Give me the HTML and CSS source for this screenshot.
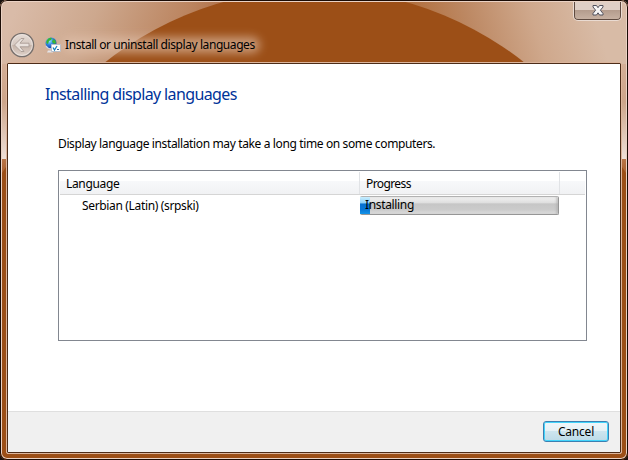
FILE: index.html
```html
<!DOCTYPE html>
<html lang="en">
<head>
<meta charset="utf-8">
<title>Install or uninstall display languages</title>
<link rel="stylesheet" href="styles.css">
</head>
<body>
<div class="window">
  <svg class="glass" width="628" height="460" viewBox="0 0 628 460" aria-hidden="true">
    <defs>
      <linearGradient id="left" gradientUnits="userSpaceOnUse" x1="20" y1="0" x2="215" y2="85">
        <stop offset="0" stop-color="#d9bba8"/><stop offset=".35" stop-color="#cda88e"/><stop offset=".75" stop-color="#bb845f"/><stop offset="1" stop-color="#a96337"/>
      </linearGradient>
      <linearGradient id="right" gradientUnits="userSpaceOnUse" x1="425" y1="50" x2="590" y2="0">
        <stop offset="0" stop-color="#b1703f"/><stop offset=".3" stop-color="#bd8964"/><stop offset=".65" stop-color="#cfa88c"/><stop offset="1" stop-color="#d8bba6"/>
      </linearGradient>
      <linearGradient id="side" x1="0" y1="0" x2="0" y2="1">
        <stop offset="0" stop-color="#d4ae96"/><stop offset=".4" stop-color="#cda58a"/><stop offset="1" stop-color="#eee0d8"/>
      </linearGradient>
      <linearGradient id="low" x1="0" y1="0" x2="0" y2="1">
        <stop offset="0" stop-color="#b87447"/><stop offset="1" stop-color="#a95f2d"/>
      </linearGradient>
      <clipPath id="top"><path d="M0 0H628V64H0z"/></clipPath>
    </defs>
    <rect width="628" height="460" fill="#9c4f17"/>
    <rect width="315" height="64" fill="url(#left)"/>
    <rect x="315" width="313" height="64" fill="url(#right)"/>
    <circle cx="314.500" cy="327.500" r="338" fill="#9c4f17" clip-path="url(#top)"/>
    <path d="M0 64H8V159H0zM620 64H628V159H620z" fill="url(#side)"/>
    <path d="M0 159H8V164L0 176zM620 159H628V176L620 164z" fill="url(#low)"/>
  </svg>

  <header class="titlebar">
    <svg class="back" width="26" height="26" viewBox="0 0 26 26" role="img" aria-label="Back">
      <defs><linearGradient id="orb" x1="0" y1="0" x2="0" y2="1"><stop offset="0" stop-color="#e6dcd6"/><stop offset=".48" stop-color="#d6c9c1"/><stop offset=".5" stop-color="#c5b3a8"/><stop offset="1" stop-color="#dfd2ca"/></linearGradient></defs>
      <circle cx="13" cy="13" r="11.600" fill="url(#orb)" stroke="#77706d" stroke-width="1.400"/>
      <circle cx="13" cy="13" r="10.400" fill="none" stroke="#eee6e2" stroke-width=".8"/>
      <path d="M5.500 13 12 6.500h3l-4 4.700h9v3.600h-9l4 4.700h-3z" fill="#e9e1dc" stroke="#a99c95" stroke-width=".9" stroke-linejoin="round"/>
    </svg>
    <svg class="app-icon" width="16" height="16" viewBox="0 0 16 16" aria-hidden="true">
      <defs><radialGradient id="sea" cx=".35" cy=".3" r=".75"><stop offset="0" stop-color="#9deaff"/><stop offset=".5" stop-color="#2b82e0"/><stop offset="1" stop-color="#1739a5"/></radialGradient></defs>
      <path d="M3 13.500h5v2H2z" fill="#e4e4e8"/>
      <circle cx="6" cy="6" r="5.500" fill="url(#sea)"/>
      <path d="M2 3Q4 0 7 1L6 3 4 4 3 7Q0 6 2 3zM8 2q3 1 3 4L9 7 7 5z" fill="#35b435"/>
      <path d="M1 9q2 3 5 3" fill="none" stroke="#ccd4e0" stroke-width="1.300"/>
      <path d="M6.500 7.500h9v7h-9z" fill="#fff" stroke="#b6bdc9"/>
      <path d="m8 10.500 1.500 2.500L12 9" fill="none" stroke="#1680bd" stroke-width="1.300"/>
      <path d="M12 12.500h2" stroke="#245aa0"/>
    </svg>
    <span class="title">Install or uninstall display languages</span>
    <div class="close">
      <svg width="12" height="11" viewBox="0 0 12 11" role="img" aria-label="Close"><path d="M1 .5h3.500L6 2.700 7.500.5H11V2L8.400 5.200 11 8.500V10H7.500L6 7.800 4.500 10H1V8.500L3.600 5.200 1 2z" fill="#f7f5f5" stroke="#50515d"/></svg>
    </div>
  </header>

  <main class="client">
    <section class="page">
      <h1>Installing display languages</h1>
      <p>Display language installation may take a long time on some computers.</p>
      <div class="list">
        <div class="row head"><div class="cell"><span>Language</span></div><div class="cell"><span>Progress</span></div><div class="rest"></div></div>
        <div class="row item"><div class="name"><span>Serbian (Latin) (srpski)</span></div><div class="bar"><div class="fill"></div><span class="status">Installing</span></div></div>
      </div>
    </section>
    <footer><button type="button"><span>Cancel</span></button></footer>
  </main>
</div>
</body>
</html>
```

FILE: styles.css
```css
* { box-sizing: border-box; }
body {
  margin: 0;
  width: 628px;
  height: 460px;
  overflow: hidden;
  background: #17110f;
  font: 12px/16px "Noto Sans", "Open Sans", sans-serif;
  color: #000;
}
.window {
  position: relative;
  width: 628px;
  height: 460px;
  padding: 1px 6px 6px;
  border-radius: 7px;
  overflow: hidden;
}
.window::after {
  content: "";
  position: absolute;
  inset: 0;
  border: 1px solid #1b0c05;
  border-radius: 7px;
  box-shadow: inset 0 0 0 1px #ead2c4;
  pointer-events: none;
}
.glass { position: absolute; inset: 0; display: block; }
.titlebar {
  position: relative;
  display: flex;
  align-items: center;
  height: 61px;
  padding: 26px 0 0 3px;
}
.back { flex: none; }
.app-icon { flex: none; margin-left: 10px; }
.title {
  position: relative;
  margin-left: 4px;
  white-space: nowrap;
  letter-spacing: -.42px;
}
.title::before {
  content: "";
  position: absolute;
  inset: 0 -5px 0 -3px;
  z-index: -1;
  border-radius: 8px;
  background: #e2c3ae;
  opacity: .65;
  filter: blur(5px);
}
.title { z-index: 0; }
.close {
  position: absolute;
  top: 0;
  right: 0;
  width: 49px;
  height: 20px;
  display: flex;
  justify-content: center;
  padding: 4px 0 0 1px;
  border: 1px solid #eadbd2;
  border-top: 0;
  border-radius: 0 0 5px 5px;
  background: linear-gradient(#dfcfc6 0 45%, #b39b8c 46%, #c9b3a4);
  box-shadow: inset 1px 0 #5e4a40, inset -1px 0 #5e4a40, inset 0 -1px #5e4a40;
}
.client {
  position: relative;
  display: flex;
  flex-direction: column;
  width: 616px;
  height: 392px;
  border: 1px solid #dcb59c;
  border-radius: 2px;
  background: #fff;
  box-shadow: inset 0 0 0 1px #4c2c18;
  padding: 1px;
}
.page { flex: 1; padding: 19px 33px 0 50px; }
h1 {
  margin: 0 0 0 -13px;
  font-size: 16px;
  line-height: 22px;
  font-weight: 400;
  color: #003399;
  letter-spacing: -.62px;
}
p { margin: 31px 0 18px; white-space: nowrap; letter-spacing: -.37px; }
.list { width: 529px; height: 171px; border: 1px solid #828790; padding: 1px; }
.row { display: flex; }
.row span { white-space: nowrap; letter-spacing: -.34px; }
.head {
  height: 23px;
  border-bottom: 1px solid #d5d5d5;
  background: linear-gradient(#fff 0 40%, #f7f8fa 41%, #f1f2f4);
}
.cell { border-right: 1px solid #e1e3e6; padding: 4px 0 0 6px; }
.cell:first-child { width: 300px; }
.cell:nth-child(2) { width: 200px; }
.cell:nth-child(2) span { letter-spacing: -.6px; }
.rest { flex: 1; }
.item { padding-top: 1px; }
.name { width: 300px; padding: 2px 0 0 22px; }
.bar {
  position: relative;
  width: 199px;
  height: 19px;
  border: 1px solid #969696;
  border-top-color: #b2b2b2;
  border-radius: 2px;
  background: linear-gradient(#f3f3f3, #dedede 35%, #c6c6c6 40%, #cbcbcb 75%, #dedede);
  box-shadow: inset -2px 0 2px #aaa8;
}
.fill {
  position: absolute;
  left: -1px;
  top: 0;
  width: 10px;
  height: 17px;
  background: linear-gradient(#c9eeff, #8cd1f7 36%, #0871cf 40%, #0877d6 75%, #1494e8);
}
.status { position: absolute; left: 4px; top: 0; }
footer {
  display: flex;
  justify-content: flex-end;
  height: 41px;
  padding: 9px 11px 0 0;
  border-top: 1px solid #dfdfdf;
  background: #f0f0f0;
}
button {
  width: 66px;
  height: 21px;
  padding: 0;
  border: 1px solid #3c7fb1;
  border-radius: 3px;
  background: linear-gradient(#f0f6f9, #e5f1f6 48%, #cde5ef 50%, #bddbe8);
  box-shadow: inset 0 0 0 1px #42d4fb;
  font: inherit;
  letter-spacing: -.2px;
  color: #000;
}
```
